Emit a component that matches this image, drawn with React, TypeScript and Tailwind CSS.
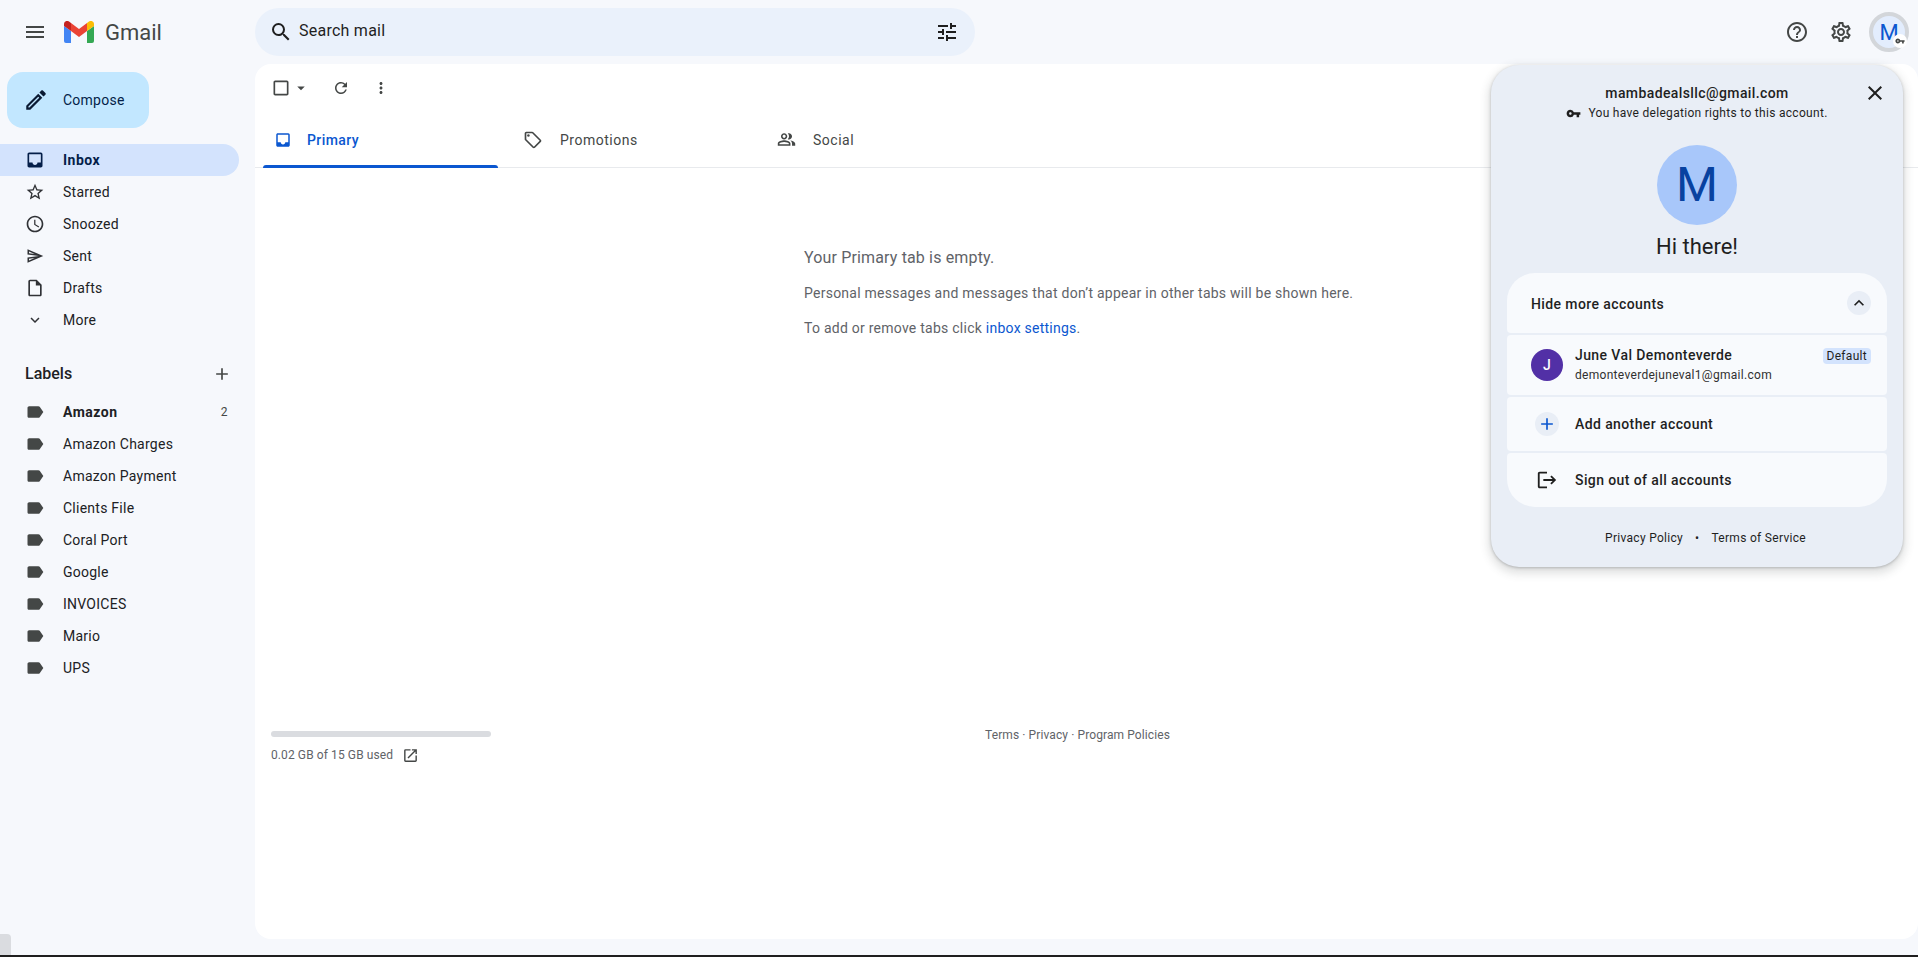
import type { ReactNode } from 'react';
import {
  MdAdd,
  MdArrowDropDown,
  MdCheckBoxOutlineBlank,
  MdClose,
  MdExpandLess,
  MdExpandMore,
  MdHelpOutline,
  MdInbox,
  MdLabel,
  MdLogout,
  MdMenu,
  MdMoreVert,
  MdOpenInNew,
  MdOutlineAccessTime,
  MdOutlineCreate,
  MdOutlineInsertDriveFile,
  MdOutlineLocalOffer,
  MdOutlinePeopleAlt,
  MdOutlineSend,
  MdOutlineSettings,
  MdOutlineStarBorder,
  MdRefresh,
  MdSearch,
  MdTune,
  MdVpnKey,
} from 'react-icons/md';

const navItems: { label: string; icon: ReactNode }[] = [
  { label: 'Starred', icon: <MdOutlineStarBorder size={20} /> },
  { label: 'Snoozed', icon: <MdOutlineAccessTime size={20} /> },
  { label: 'Sent', icon: <MdOutlineSend size={18} /> },
  { label: 'Drafts', icon: <MdOutlineInsertDriveFile size={20} /> },
  { label: 'More', icon: <MdExpandMore size={18} /> },
];

const labels = ['Amazon Charges', 'Amazon Payment', 'Clients File', 'Coral Port', 'Google', 'INVOICES', 'Mario', 'UPS'];

function GmailLogo() {
  return (
    <svg width="30" height="22" viewBox="0 0 30 22">
      <path d="M2 22h5V10L0 5v15a2 2 0 0 0 2 2z" fill="#4285f4" />
      <path d="M23 22h5a2 2 0 0 0 2-2V5l-7 5z" fill="#34a853" />
      <path d="M23 2v8l7-5V3c0-2.600-3-4-5-2.500z" fill="#fbbc04" />
      <path d="M7 10V2l8 6 8-6v8l-8 6z" fill="#ea4335" />
      <path d="M0 3v2l7 5V2L5 .500C3-1 0 .400 0 3z" fill="#c5221f" />
    </svg>
  );
}

function Sidebar() {
  return (
    <aside className="flex w-[255px] shrink-0 flex-col pt-2 text-[14px] text-[#202124]">
      <button className="ml-[7px] flex h-14 w-[142px] items-center rounded-2xl bg-[#c2e7ff] pl-[16px] text-[14px] text-[#041e49]">
        <MdOutlineCreate size={26} className="text-[#0a1a33]" />
        <span className="ml-[14px]">Compose</span>
      </button>
      <nav className="mt-4 w-[239px]">
        <div className="flex h-8 items-center rounded-r-full bg-[#d3e3fd] pl-[25px] font-bold tracking-[0.5px] text-[#041e49]">
          <MdInbox size={20} />
          <span className="ml-[18px]">Inbox</span>
        </div>
        {navItems.map((item) => (
          <div key={item.label} className="flex h-8 items-center pl-[25px]">
            <span className="flex w-5 justify-center text-[#303236]">{item.icon}</span>
            <span className="ml-[18px]">{item.label}</span>
          </div>
        ))}
      </nav>
      <div className="mt-[22px] flex h-8 w-[239px] items-center justify-between pl-[25px] pr-[7px] text-[16px] font-medium tracking-normal">
        <span>Labels</span>
        <MdAdd size={20} className="text-[#444746]" />
      </div>
      <div className="mt-[6px] w-[239px]">
        <div className="flex h-8 items-center pl-[25px] pr-[11px] font-bold tracking-[0.5px]">
          <MdLabel size={20} className="text-[#444746]" />
          <span className="ml-[18px] flex-1">Amazon</span>
          <span className="text-[12px] font-normal text-[#444746]">2</span>
        </div>
        {labels.map((name) => (
          <div key={name} className="flex h-8 items-center pl-[25px]">
            <MdLabel size={20} className="text-[#444746]" />
            <span className="ml-[18px]">{name}</span>
          </div>
        ))}
      </div>
    </aside>
  );
}

function Main() {
  return (
    <main className="flex h-[875px] flex-1 flex-col rounded-2xl bg-white">
      <div className="flex h-[48px] items-center pl-[16px] text-[#444746]">
        <MdCheckBoxOutlineBlank size={20} />
        <MdArrowDropDown size={18} className="ml-[1px]" />
        <MdRefresh size={18} className="ml-[22px]" />
        <MdMoreVert size={18} className="ml-[22px]" />
      </div>
      <div className="flex h-[56px] border-b border-[#e8eaed] pl-2 text-[14px] tracking-[0.5px] text-[#444746]">
        <div className="relative flex w-[235px] items-center pl-[11px] font-medium tracking-[0.4px] text-[#0b57d0]">
          <MdInbox size={18} />
          <span className="ml-[15px] pt-[2px]">Primary</span>
          <span className="absolute inset-x-0 bottom-[-1px] h-[3px] rounded-t-[3px] bg-[#0b57d0]" />
        </div>
        <div className="flex w-[253px] items-center pl-[25px]">
          <MdOutlineLocalOffer size={20} />
          <span className="ml-[17px] pt-[2px]">Promotions</span>
        </div>
        <div className="flex items-center pl-[26px]">
          <MdOutlinePeopleAlt size={19} />
          <span className="ml-[17px] pt-[2px]">Social</span>
        </div>
      </div>
      <div className="ml-[549px] mt-[80px] text-[14px] text-[#5f6368]">
        <p className="text-[16px] leading-[20px] tracking-[0.15px]">Your Primary tab is empty.</p>
        <p className="mt-[15px] leading-[20px]">Personal messages and messages that don’t appear in other tabs will be shown here.</p>
        <p className="mt-[15px] leading-[20px]">
          To add or remove tabs click <span className="text-[#0b57d0]">inbox settings</span>.
        </p>
      </div>
      <div className="relative mt-[393px] flex text-[12px] tracking-[0.1px] text-[#5f6368]">
        <div className="ml-4 w-[220px]">
          <div className="h-[6px] rounded-full bg-[#dadce0]" />
          <div className="mt-2 flex h-5 items-center">
            <span>0.02 GB of 15 GB used</span>
            <MdOpenInNew size={17} className="ml-[9px] text-[#444746]" />
          </div>
        </div>
        <div className="ml-[494px] leading-[8px]">Terms · Privacy · Program Policies</div>
      </div>
    </main>
  );
}

function AccountRow({ icon, label, className }: { icon: ReactNode; label: string; className: string }) {
  return (
    <div className={`flex h-[54px] items-center bg-[#f8fafd] pl-7 text-[14px] text-[#1f1f1f] ${className}`}>
      <span className="flex w-6 shrink-0 justify-center">{icon}</span>
      <span className="ml-4 font-medium tracking-[0.4px]">{label}</span>
    </div>
  );
}

function AccountPopup() {
  return (
    <div className="absolute left-[1491px] top-[65px] flex h-[502px] w-[412px] flex-col items-center rounded-[28px] bg-[#e9eef6] px-4 shadow-[0_4px_8px_3px_rgba(60,64,67,0.15),0_1px_3px_rgba(60,64,67,0.3)]">
      <button className="absolute right-[16px] top-[16px] text-[#1f1f1f]">
        <MdClose size={24} />
      </button>
      <div className="mt-[18px] text-[14px] font-medium leading-5 tracking-[0.4px] text-[#1f1f1f]">mambadealsllc@gmail.com</div>
      <div className="flex h-5 items-center text-[12px] tracking-[0.3px] text-[#1f1f1f]">
        <MdVpnKey size={15} className="mr-[7px]" />
        You have delegation rights to this account.
      </div>
      <div className="mt-[22px] flex h-20 w-20 items-center justify-center rounded-full bg-[#a8c7fa] text-[48px] tracking-normal text-[#0842a0]">M</div>
      <div className="mt-[6px] text-[22px] leading-8 tracking-normal text-[#1f1f1f]">Hi there!</div>
      <div className="mt-[10px] flex w-[380px] flex-col gap-[2px]">
        <div className="flex h-[60px] items-center justify-between rounded-t-[28px] rounded-b-[4px] bg-[#f8fafd] pl-6 pr-4 text-[14px] font-medium tracking-[0.4px] text-[#1f1f1f]">
          <span className="pt-[2px]">Hide more accounts</span>
          <span className="flex h-6 w-6 items-center justify-center rounded-full bg-[#e9eef6]">
            <MdExpandLess size={20} />
          </span>
        </div>
        <div className="relative flex h-[60px] items-center rounded-[4px] bg-[#f8fafd] pl-6 text-[#1f1f1f]">
          <span className="flex h-8 w-8 items-center justify-center rounded-full bg-[#5230a6] text-[14px] font-medium text-white">J</span>
          <div className="ml-3">
            <div className="text-[14px] font-medium leading-5 tracking-[0.4px]">June Val Demonteverde</div>
            <div className="text-[12px] leading-5 tracking-[0.3px] text-[#303030]">demonteverdejuneval1@gmail.com</div>
          </div>
          <span className="absolute right-4 top-[13px] rounded-[4px] bg-[#d3e3fd] px-1 text-[12px] leading-4 tracking-[0.3px] text-[#1f1f1f]">Default</span>
        </div>
        <AccountRow
          className="rounded-[4px]"
          label="Add another account"
          icon={
            <span className="flex h-6 w-6 shrink-0 items-center justify-center rounded-full bg-[#e9eef6] text-[#0b57d0]">
              <MdAdd size={20} />
            </span>
          }
        />
        <AccountRow className="rounded-b-[28px] rounded-t-[4px]" label="Sign out of all accounts" icon={<MdLogout size={22} className="shrink-0" />} />
      </div>
      <div className="ml-[17px] mt-[21px] flex h-5 items-center text-[12px] tracking-[0.3px] text-[#1f1f1f]">
        <span>Privacy Policy</span>
        <span className="mx-3">•</span>
        <span>Terms of Service</span>
      </div>
    </div>
  );
}

export default function App() {
  return (
    <div className="relative flex h-[957px] flex-col overflow-hidden bg-[#f6f8fc] font-['Roboto',sans-serif] tracking-[0.25px]">
      <header className="flex h-16 shrink-0 items-center">
        <div className="flex w-[255px] items-center pl-[23px] tracking-normal">
          <MdMenu size={24} className="text-[#444746]" />
          <span className="ml-[17px]">
            <GmailLogo />
          </span>
          <span className="ml-[11px] text-[22px] text-[#444746]">Gmail</span>
        </div>
        <div className="flex h-12 w-[720px] items-center rounded-3xl bg-[#eaf1fb] pl-[14px] pr-[16px] text-[16px] text-[#1f1f1f]">
          <MdSearch size={24} className="text-[#1f1f1f]" />
          <span className="ml-[6px] flex-1 pb-[2px]">Search mail</span>
          <MdTune size={24} className="text-[#1f1f1f]" />
        </div>
        <div className="ml-auto flex items-center pr-[9px]">
          <MdHelpOutline size={24} className="text-[#444746]" />
          <MdOutlineSettings size={24} className="ml-5 text-[#444746]" />
          <div className="relative ml-[16px] flex h-10 w-10 items-center justify-center rounded-full border-4 border-[#d3d6da] bg-[#e3edfd] text-[22px] tracking-normal text-[#0b57d0]">
            M
            <span className="absolute bottom-0 right-[-2px] flex h-[14px] w-[14px] items-center justify-center rounded-full bg-white text-[#444746]">
              <MdVpnKey size={10} />
            </span>
          </div>
        </div>
      </header>
      <div className="flex flex-1">
        <Sidebar />
        <div className="flex-1">
          <Main />
        </div>
      </div>
      <div className="h-[2px] shrink-0 bg-[#1f1f1f]" />
      <div className="absolute bottom-[2px] left-0 h-[21px] w-[11px] rounded-tr-[4px] bg-[#dadce0]" />
      <AccountPopup />
    </div>
  );
}
